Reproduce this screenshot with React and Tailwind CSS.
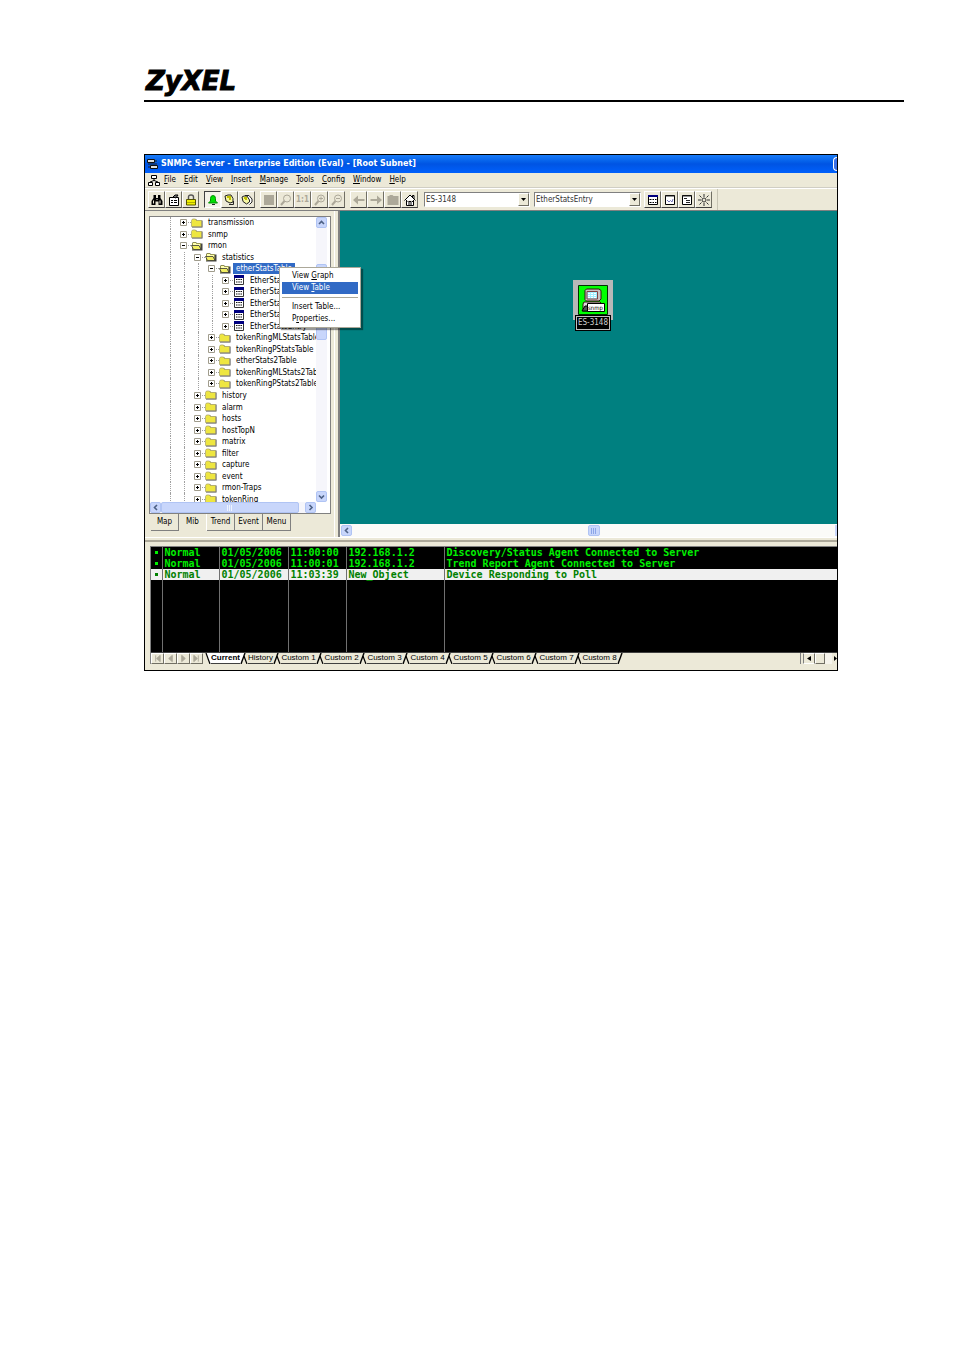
import { useState } from 'react';
import clsx from 'clsx';

const UI_FONT = "font-['DejaVu_Sans_Condensed','DejaVu_Sans',sans-serif]";

const MENUS = ['File', 'Edit', 'View', 'Insert', 'Manage', 'Tools', 'Config', 'Window', 'Help'];

const TREE = [
    { depth: 0, label: 'transmission' },
    { depth: 0, label: 'snmp' },
    { depth: 0, label: 'rmon', open: true },
    { depth: 1, label: 'statistics', open: true },
    { depth: 2, label: 'etherStatsTable', open: true, selected: true },
    { depth: 3, label: 'EtherStatsEntry', entry: true },
    { depth: 3, label: 'EtherStatsEntry', entry: true },
    { depth: 3, label: 'EtherStatsEntry', entry: true },
    { depth: 3, label: 'EtherStatsEntry', entry: true },
    { depth: 3, label: 'EtherStatsEntry', entry: true },
    { depth: 2, label: 'tokenRingMLStatsTable' },
    { depth: 2, label: 'tokenRingPStatsTable' },
    { depth: 2, label: 'etherStats2Table' },
    { depth: 2, label: 'tokenRingMLStats2Table' },
    { depth: 2, label: 'tokenRingPStats2Table' },
    { depth: 1, label: 'history' },
    { depth: 1, label: 'alarm' },
    { depth: 1, label: 'hosts' },
    { depth: 1, label: 'hostTopN' },
    { depth: 1, label: 'matrix' },
    { depth: 1, label: 'filter' },
    { depth: 1, label: 'capture' },
    { depth: 1, label: 'event' },
    { depth: 1, label: 'rmon-Traps' },
    { depth: 1, label: 'tokenRing' },
];

const LOG = [
    ['Normal', '01/05/2006', '11:00:00', '192.168.1.2', 'Discovery/Status Agent Connected to Server'],
    ['Normal', '01/05/2006', '11:00:01', '192.168.1.2', 'Trend Report Agent Connected to Server'],
    ['Normal', '01/05/2006', '11:03:39', 'New_Object', 'Device Responding to Poll'],
];

const LOG_TABS = ['Current', 'History', 'Custom 1', 'Custom 2', 'Custom 3', 'Custom 4', 'Custom 5', 'Custom 6', 'Custom 7', 'Custom 8'];

const Glyph = ({ children, size = 12 }) => (
    <svg width={size} height={size} viewBox="0 0 12 12" fill="none" className="shrink-0" aria-hidden="true">
        {children}
    </svg>
);

const Lens = () => (
    <>
        <circle cx="7" cy="4.5" r="3.5" stroke="#aca899" />
        <path d="M4.5 7 L1 11" stroke="#aca899" strokeWidth="2" />
    </>
);

const ICONS = {
    find: (
        <>
            <path d="M2.5 1 H5 V4 H7 V1 H9.5 V4 L11.5 7 V11 H7.5 V7.5 H4.5 V11 H0.5 V7 L2.5 4 Z" fill="#000" />
            <path d="M2.5 6.5 V9.5 M9 6.5 V9.5 M5.5 5.5 H6.5" stroke="#ece9d8" />
        </>
    ),
    sheet: (
        <>
            <path d="M1.5 3.5 H10.5 V11.5 H1.5 Z" fill="#fff" stroke="#000" />
            <path d="M3 6.5 H5 M6 6.5 H9 M3 8.5 H5 M6 8.5 H9" stroke="#000" />
            <path d="M5 3 L7 1 H10 L8 4 Z" fill="#777" stroke="#000" />
        </>
    ),
    lock: (
        <>
            <path d="M3.5 6 V3 Q3.5 1 6 1 Q8.5 1 8.5 3 V6" stroke="#555" strokeWidth="1.4" />
            <path d="M1.5 5.5 H10.5 V11 H1.5 Z" fill="#f0f000" stroke="#555500" />
            <path d="M2 8.5 H10" stroke="#b0b000" />
        </>
    ),
    bell: (
        <>
            <path d="M1.5 9 L3.5 7 V4.5 Q3.5 1.5 6 1.5 Q8.5 1.5 8.5 4.5 V7 L10.5 9 Z" fill="#00e000" stroke="#009000" />
            <path d="M5 10.5 H8" stroke="#222" />
        </>
    ),
    bellPen: (
        <>
            <path d="M1 2 L4 1 H7 L9 4.5 V8 L6 9 L2 7 Z" fill="#f6f6a0" stroke="#222" />
            <path d="M3 3 H6 V6" stroke="#c0c000" strokeWidth="2" />
            <path d="M9.5 7 V10.5 H5" stroke="#222" />
        </>
    ),
    bellAll: (
        <>
            <path d="M4 1.5 H8 L11 5 V8 L8.5 10.5" fill="#fff" stroke="#222" />
            <path d="M1 3 L3 2 H6 L8.5 6 V8 L5.5 10 L2 7.5 Z" fill="#f6f6a0" stroke="#222" />
            <path d="M3 4 H5 V6" stroke="#c0c000" strokeWidth="2" />
        </>
    ),
    block: <path d="M1 1 H11 V11 H1 Z" fill="#aca899" />,
    lens: <Lens />,
    zoomIn: (
        <>
            <Lens />
            <path d="M5 4.5 H9 M7 2.5 V6.5" stroke="#aca899" />
        </>
    ),
    zoomOut: (
        <>
            <Lens />
            <path d="M5 4.5 H9" stroke="#aca899" />
        </>
    ),
    back: <path d="M0 6 L5 1.5 V5 H11.5 V7 H5 V10.5 Z" fill="#aca899" />,
    forward: <path d="M12 6 L7 1.5 V5 H0.5 V7 H7 V10.5 Z" fill="#aca899" />,
    folderUp: <path d="M0.5 2 H2 L3 1 H5.5 L6.5 2 H11.5 V11 H0.5 Z" fill="#aca899" />,
    home: (
        <>
            <path d="M0.5 6.5 L6 1 L11.5 6.5 M2.5 6 V11.5 H9.5 V6 M8.5 3.5 V1.5 H10 V5" fill="#fff" stroke="#000" />
            <path d="M5 11 V7.5 H7 V11 M3.5 7.5 H4.5 M7.8 7.5 H9" stroke="#000" />
        </>
    ),
    table: (
        <>
            <path d="M1.5 1.5 H10.5 V10.5 H1.5 Z" fill="#fff" stroke="#000" />
            <path d="M1 2 H11" stroke="#000080" strokeWidth="2" />
            <path d="M2.5 5.5 H4.5 M5.5 5.5 H7 M8 5.5 H9.5 M2.5 8.5 H4.5 M5.5 8.5 H7 M8 8.5 H9.5" stroke="#000" />
        </>
    ),
    graph: (
        <>
            <path d="M1.5 1.5 H10.5 V10.5 H1.5 Z" fill="#fff" stroke="#000" />
            <path d="M1 2 H11" stroke="#222" strokeWidth="1" />
            <path d="M3 6 L5 8 L6.5 6.5 L8 8 L9 5" stroke="#7777bb" />
        </>
    ),
    list: (
        <>
            <path d="M1.5 1.5 H10.5 V10.5 H1.5 Z" fill="#fff" stroke="#000" />
            <path d="M1 2 H11 M3 4.5 H6 M5 6.5 H9 M5 8.5 H9" stroke="#222" />
        </>
    ),
    sun: (
        <>
            <circle cx="6" cy="6" r="2" stroke="#333" />
            <path d="M6 0 V3 M6 9 V12 M0 6 H3 M9 6 H12 M1.5 1.5 L3.5 3.5 M8.5 8.5 L10.5 10.5 M10.5 1.5 L8.5 3.5 M3.5 8.5 L1.5 10.5" stroke="#333" />
        </>
    ),
};

const ToolButton = ({ name, label, pressed, text }) => (
    <button
        type="button"
        aria-label={label}
        className={clsx(
            'flex size-[17px] items-center justify-center border',
            pressed
                ? 'border-t-[#404040] border-l-[#404040] border-r-white border-b-white bg-[#f4f2e8]'
                : 'border-t-white border-l-white border-r-[#716f64] border-b-[#404040] bg-[#ece9d8]'
        )}
    >
        {text ? <span className="text-[8px] leading-none font-bold text-[#aca899]">{text}</span> : <Glyph>{ICONS[name]}</Glyph>}
    </button>
);

const Combo = ({ label, value, className }) => (
    <div className={clsx('relative h-[15px] border border-t-[#808080] border-l-[#808080] border-r-white border-b-white bg-white', className)}>
        <select aria-label={label} className="block h-full w-full appearance-none px-px text-[8px] leading-[13px] text-[#333] outline-none">
            <option>{value}</option>
        </select>
        <span className="pointer-events-none absolute top-0 right-0 flex h-full w-[11px] items-center justify-center border border-t-white border-l-white border-r-[#716f64] border-b-[#716f64] bg-[#ece9d8]">
            <svg width="5" height="3" viewBox="0 0 5 3" aria-hidden="true"><path d="M0 0 H5 L2.5 3 Z" /></svg>
        </span>
    </div>
);

const ARROWS = {
    up: 'M2 6 L4.5 3.5 L7 6',
    down: 'M2 3.5 L4.5 6 L7 3.5',
    left: 'M6 2 L3.5 4.5 L6 7',
    right: 'M3.5 2 L6 4.5 L3.5 7',
};

const ScrollButton = ({ dir }) => (
    <button type="button" aria-label={`Scroll ${dir}`} className="flex size-[11px] shrink-0 items-center justify-center rounded-xs border border-[#b0c4f4] bg-[#c8d6fb]">
        <svg width="9" height="9" viewBox="0 0 9 9" fill="none" stroke="#4d6185" strokeWidth="1.6" aria-hidden="true">
            <path d={ARROWS[dir]} />
        </svg>
    </button>
);

const Grip = ({ stroke = '#8ba5e8' }) => (
    <svg width="6" height="6" viewBox="0 0 6 6" stroke={stroke} aria-hidden="true">
        <path d="M0.5 0 V6 M2.5 0 V6 M4.5 0 V6" />
    </svg>
);

const FolderIcon = ({ open }) => (
    <svg width="12" height="10" viewBox="0 0 12 10" className="shrink-0" aria-hidden="true">
        <path d="M1 2.5 L2 1 H5 L6 2.5 H11.5 V9.5 H1 Z" fill="#444" />
        {open ? (
            <>
                <path d="M1.5 2.5 L2.5 1.5 H4.5 L5.5 2.5 H9.5 V8.5 H1.5 Z" fill="#ffffb0" stroke="#8a8a40" strokeWidth="0.8" />
                <path d="M0.5 4.5 H8 L10 8.5 H2.5 Z" fill="#f2ee60" stroke="#333" strokeWidth="0.8" />
            </>
        ) : (
            <path d="M0.5 2.5 L1.5 1 H4.5 L5.5 2.5 H10.5 V8.5 H0.5 Z" fill="#eee640" stroke="#b0aa70" strokeWidth="0.8" />
        )}
    </svg>
);

const EntryIcon = () => (
    <svg width="10" height="10" viewBox="0 0 10 10" className="shrink-0" aria-hidden="true">
        <path d="M0.5 0.5 H9.5 V9.5 H0.5 Z" fill="#fff" stroke="#333" />
        <path d="M0 1.5 H10" stroke="#000080" strokeWidth="3" />
        <path d="M2 4.5 H3.5 M4.3 4.5 H5.8 M6.5 4.5 H8 M2 7 H3.5 M4.3 7 H5.8 M6.5 7 H8" stroke="#111" />
    </svg>
);

const Guide = () => (
    <span className="flex w-[14px] shrink-0 justify-center self-stretch">
        <span className="border-l border-dotted border-[#a0a0a0]" />
    </span>
);

const TreeRow = ({ node }) => (
    <li className="flex min-h-0 flex-1 items-center whitespace-nowrap">
        {Array.from({ length: node.depth + 1 }, (_, i) => <Guide key={i} />)}
        <button type="button" aria-label={`Toggle ${node.label}`} className="shrink-0">
            <svg width="14" height="7" viewBox="0 0 14 7" aria-hidden="true">
                <path d="M3.5 0.5 H9.5 V6.5 H3.5 Z" fill="#fff" stroke="#a09c8c" />
                <path d={node.open ? 'M5 3.5 H8' : 'M5 3.5 H8 M6.5 2 V5'} stroke="#000" />
                <path d="M11 3.5 H12 M13 3.5 H14" stroke="#a0a0a0" />
            </svg>
        </button>
        <span className="flex w-3 shrink-0 justify-center">{node.entry ? <EntryIcon /> : <FolderIcon open={node.open} />}</span>
        <span className={clsx('ml-0.5 px-[3px] text-[8px] leading-[11px]', node.selected ? 'bg-[#316ac5] text-white' : 'text-black')}>
            {node.label}
        </span>
    </li>
);

const TreePanel = () => {
    const [tab, setTab] = useState('Mib');

    return (
        <div className="flex w-[189px] shrink-0 flex-col pt-[5px] pl-1">
            <div className="flex h-[298px] w-[182px] flex-col border border-[#808080] bg-white">
                <div className="flex min-h-0 flex-1">
                    <div className="min-w-0 flex-1 overflow-hidden">
                        <ul className="flex h-[288px] flex-col pl-[13px]">
                            {TREE.map((node, i) => <TreeRow key={i} node={node} />)}
                        </ul>
                    </div>
                    <div className="mr-[3px] flex w-[11px] flex-col bg-[#f6f6fb]">
                        <ScrollButton dir="up" />
                        <div className="mt-9 h-[76px] rounded-xs border border-[#b0c4f4] bg-[#c8d6fb]" />
                        <div className="flex-1" />
                        <ScrollButton dir="down" />
                    </div>
                </div>
                <div className="mr-[14px] flex h-[11px] bg-[#f6f6fb]">
                    <ScrollButton dir="left" />
                    <div className="mr-1.5 flex flex-1 items-center justify-center rounded-xs border border-[#b0c4f4] bg-[#c8d6fb]">
                        <Grip stroke="#eef4fe" />
                    </div>
                    <ScrollButton dir="right" />
                </div>
            </div>
            <div role="tablist" className="flex h-[18px] pl-0.5">
                {['Map', 'Mib', 'Trend', 'Event', 'Menu'].map((name) => (
                    <button
                        key={name}
                        type="button"
                        role="tab"
                        aria-selected={tab === name}
                        onClick={() => setTab(name)}
                        className={clsx(
                            'h-[17px] w-7 border-r border-b text-center text-[8px]',
                            tab === name ? 'border-r-white border-b-transparent' : 'border-[#808080]'
                        )}
                    >
                        {name}
                    </button>
                ))}
            </div>
        </div>
    );
};

const MapPanel = () => (
    <div className="flex min-w-0 flex-1 flex-col">
        <div className="relative flex-1 bg-[#008080]">
            <div className="absolute top-[69px] left-[233px] flex w-10 flex-col items-center">
                <div className="flex size-10 items-center justify-center bg-[#b8b8b8]">
                    <svg width="30" height="30" viewBox="0 0 30 30" aria-hidden="true">
                        <path d="M0.5 0.5 H29.5 V29.5 H0.5 Z" fill="#00ff00" stroke="#003000" />
                        <path d="M8.5 4 H21 L23 5.5 V14 L21 16 H8.5 L7 14.5 V5.5 Z" fill="#c8c0c0" stroke="#301010" />
                        <path d="M9 6.5 H19.5 V14 H9 Z" fill="#a0f0ff" stroke="#804040" />
                        <path d="M10 8.5 H19 M10 10.5 H19 M10 12.5 H19" stroke="#fff" strokeDasharray="2 1" />
                        <path d="M6 17 H22 L24 19 V26 H5 V19 Z" fill="#e0d8d8" stroke="#301010" />
                        <path d="M4 26 L7 21 H10 V26 Z" fill="#555" stroke="#000" />
                        <path d="M9.5 18.5 H26.5 V26.5 H9.5 Z" fill="#fff" stroke="#000" />
                        <text x="10" y="25" fontSize="6" fontFamily="DejaVu Sans Condensed">snmp</text>
                    </svg>
                </div>
                <div className="-mt-1 h-[14px] border border-[#c0c0c0] bg-black px-px text-[8px] leading-3 whitespace-nowrap text-[#d0d0d0] outline outline-black">ES-3148</div>
            </div>
        </div>
        <div className="flex h-[13px] items-center justify-between bg-[#fbfbf8] pl-px">
            <ScrollButton dir="left" />
            <span className="flex h-[11px] w-3 items-center justify-center rounded-xs border border-[#b0c4f4] bg-[#c8d6fb]"><Grip /></span>
            <span className="h-[11px] w-0.5 bg-[#c8d6fb]" />
        </div>
    </div>
);

const ContextMenu = () => {
    const item = 'block h-3 w-full pl-[10px] text-left text-[8px] leading-3';
    return (
        <div role="menu" className="absolute top-[112px] left-[134px] w-[82px] border border-[#aca899] bg-white p-0.5 shadow-[2px_2px_1px_#00000066]">
            <button type="button" role="menuitem" className={item}>View <u>G</u>raph</button>
            <button type="button" role="menuitem" className={clsx(item, 'bg-[#316ac5] text-white')}>View <u>T</u>able</button>
            <hr className="my-[3px] border-[#aca899]" />
            <button type="button" role="menuitem" className={item}>Insert Table...</button>
            <button type="button" role="menuitem" className={item}>P<u>r</u>operties...</button>
        </div>
    );
};

const EventLog = () => (
    <table className="h-[105px] w-full table-fixed border-collapse bg-black font-['DejaVu_Sans_Mono',monospace] text-[10px] leading-[11px] font-bold text-[#00f000]">
        <colgroup>
            <col className="w-[11px]" />
            <col className="w-[57px]" />
            <col className="w-[69px]" />
            <col className="w-[58px]" />
            <col className="w-[98px]" />
            <col />
        </colgroup>
        <tbody>
            {LOG.map((row, i) => (
                <tr key={i} className={clsx('h-[11px]', i === 2 && 'bg-[#f0f0f0] text-[#008000]')}>
                    <td className="border-r border-[#707070] p-0"><span className="mx-auto block size-[3px] bg-current" /></td>
                    {row.map((cell, j) => (
                        <td key={j} className="border-r border-[#707070] p-0 pl-0.5 whitespace-nowrap last:border-r-0">{cell}</td>
                    ))}
                </tr>
            ))}
            <tr>
                {[0, 1, 2, 3, 4, 5].map((n) => <td key={n} className="border-r border-[#707070] p-0 last:border-r-0" />)}
            </tr>
        </tbody>
    </table>
);

const NAV = [
    ['First', 'M3 1 V8 M8 1 L4 4.5 L8 8 Z'],
    ['Previous', 'M7 1 L3 4.5 L7 8 Z'],
    ['Next', 'M3 1 L7 4.5 L3 8 Z'],
    ['Last', 'M7 1 V8 M2 1 L6 4.5 L2 8 Z'],
];

// Slanted edge shared by two neighbouring tabs
const Slant = ({ first, last, fillLeft, fillRight }) => (
    <svg width="8" height="11" viewBox="0 0 8 11" fill="none" stroke="#000" className="shrink-0" aria-hidden="true">
        {fillLeft && <path d="M0 0 H5 L1 11 H0 Z" fill="#fff" stroke="none" />}
        {fillRight && <path d="M3 0 H8 V11 H7 Z" fill="#fff" stroke="none" />}
        {!first && <path d="M1 11 L5 0" strokeWidth="1.4" />}
        {(first || !last) && <path d={first ? 'M3 0 L7 11' : 'M4 3 L7 11'} strokeWidth="1.2" />}
    </svg>
);

const LogTabs = () => {
    const [current, setCurrent] = useState('Current');

    return (
        <div className="flex h-3 overflow-hidden border-t border-[#404040] text-[8px] leading-[10px]">
            {NAV.map(([label, d]) => (
                <button key={label} type="button" aria-label={label} className="flex w-[13px] shrink-0 items-center justify-center border border-t-white border-l-white border-r-[#716f64] border-b-[#716f64]">
                    <svg width="9" height="9" viewBox="0 0 10 9" fill="#aca899" stroke="#aca899" aria-hidden="true"><path d={d} /></svg>
                </button>
            ))}
            <Slant first fillRight={current === LOG_TABS[0]} />
            {LOG_TABS.map((name, i) => (
                <div key={name} className="flex shrink-0">
                    <button
                        type="button"
                        onClick={() => setCurrent(name)}
                        className={clsx(
                            "border-b border-[#404040] text-center font-['Liberation_Sans',sans-serif] whitespace-nowrap",
                            i === 0 && 'w-[29px]',
                            i === 1 && 'w-[25px]',
                            i > 1 && 'w-[35px]',
                            current === name && 'bg-white font-bold'
                        )}
                    >
                        {name}
                    </button>
                    <Slant
                        last={i === LOG_TABS.length - 1}
                        fillLeft={current === name}
                        fillRight={current === LOG_TABS[i + 1]}
                    />
                </div>
            ))}
            <div className="flex-1" />
            <div className="flex w-[37px] shrink-0 border-l border-[#808080]">
                <button type="button" aria-label="Scroll log left" className="ml-0.5 flex w-3 items-center justify-center border border-t-white border-l-[#808080] border-r-[#716f64] border-b-white">
                    <svg width="4" height="5" viewBox="0 0 4 5" aria-hidden="true"><path d="M4 0 V5 L0 2.5 Z" /></svg>
                </button>
                <span className="w-[10px] border border-t-white border-l-white border-r-[#716f64] border-b-[#716f64]" />
                <span className="w-[7px] bg-[#f6f4ec]" />
                <button type="button" aria-label="Scroll log right" className="flex flex-1 items-center justify-end">
                    <svg width="3" height="5" viewBox="0 0 3 5" aria-hidden="true"><path d="M0 0 V5 L3 2.5 Z" /></svg>
                </button>
            </div>
        </div>
    );
};

const App = () => (
    <div className="min-h-screen bg-white pt-[66px] pr-[50px] pl-36">
        <header className="border-b-2 border-black pb-1">
            <h1 className="pl-0.5 font-['DejaVu_Sans',sans-serif] text-[26px] leading-[30px] font-bold italic [-webkit-text-stroke:1px_black]">ZyXEL</h1>
        </header>

        <main className={clsx('relative mt-[52px] mr-[66px] overflow-hidden border border-black bg-[#ece9d8] text-black', UI_FONT)}>
            <div className="flex h-[18px] items-center gap-[3px] bg-linear-to-b from-[#1a7cf8] via-[#0054e3] to-[#0060fc] pl-0.5 text-white">
                <svg width="11" height="12" viewBox="0 0 11 12" aria-hidden="true">
                    <path d="M0.5 1.5 H7.5 V4.5 H0.5 Z M3.5 7.5 H10.5 V10.5 H3.5 Z" fill="#ddd" stroke="#111" />
                    <path d="M8 3 H10 M1 6 H10 M1 9 H3" stroke="#222" />
                </svg>
                <h2 className="flex-1 font-['DejaVu_Sans',sans-serif] text-[8px] font-bold whitespace-nowrap">SNMPc Server - Enterprise Edition (Eval) - [Root Subnet]</h2>
                <span className="h-[14px] w-1 rounded-l-sm border border-r-0 border-white bg-[#3a70e8]" />
            </div>

            <nav className="flex h-[15px] items-center gap-2 border-b border-[#d0cec4] pl-[3px] text-[8px]">
                <svg width="12" height="11" viewBox="0 0 12 11" fill="#fff" stroke="#000" className="-mr-1" aria-hidden="true">
                    <path d="M3.5 0.5 H8.5 V3.5 H3.5 Z M6 4 V6 M2 7 L6 5.5 L10 7 M0.5 7.5 H4.5 V10.5 H0.5 Z M7.5 7.5 H11.5 V10.5 H7.5 Z" />
                </svg>
                {MENUS.map((name) => (
                    <button key={name} type="button"><u>{name[0]}</u>{name.slice(1)}</button>
                ))}
            </nav>

            <div className="flex h-[23px] items-center gap-[5px] border-t border-b border-t-white border-b-[#808080] pl-[3px]">
                <div className="flex">
                    <ToolButton name="find" label="Find" />
                    <ToolButton name="sheet" label="Properties" />
                    <ToolButton name="lock" label="Lock" />
                </div>
                <div className="flex">
                    <ToolButton name="bell" label="Current alarms" pressed />
                    <ToolButton name="bellPen" label="Edit alarm" />
                    <ToolButton name="bellAll" label="All alarms" />
                </div>
                <div className="flex">
                    <ToolButton name="block" label="Stop" />
                    <ToolButton name="lens" label="Zoom" />
                    <ToolButton label="Actual size" text="1:1" />
                    <ToolButton name="zoomIn" label="Zoom in" />
                    <ToolButton name="zoomOut" label="Zoom out" />
                </div>
                <div className="flex">
                    <ToolButton name="back" label="Back" />
                    <ToolButton name="forward" label="Forward" />
                    <ToolButton name="folderUp" label="Parent" />
                    <ToolButton name="home" label="Root" />
                </div>
                <div className="flex gap-1 pl-px">
                    <Combo label="Device" value="ES-3148" className="w-[106px]" />
                    <Combo label="Table entry" value="EtherStatsEntry" className="mr-[-2px] w-[107px]" />
                </div>
                <div className="flex">
                    <ToolButton name="table" label="View table" />
                    <ToolButton name="graph" label="View graph" />
                    <ToolButton name="list" label="View list" />
                    <ToolButton name="sun" label="Options" />
                </div>
                <span className="h-full border-l border-[#c8c5b4]" />
            </div>

            <div className="flex h-[326px]">
                <TreePanel />
                <div className="w-1.5 shrink-0 border-r-2 border-l border-l-white border-r-[#808080] bg-[#ece9d8]" />
                <MapPanel />
            </div>

            <section className="border-t border-white pt-0.5">
                <div className="border-t-2 border-[#aca899] pt-1 pb-[6px] pl-[5px]">
                    <div className="border-t border-l border-[#808080]">
                        <EventLog />
                        <LogTabs />
                    </div>
                </div>
            </section>

            <ContextMenu />
        </main>
    </div>
);

export default App;
